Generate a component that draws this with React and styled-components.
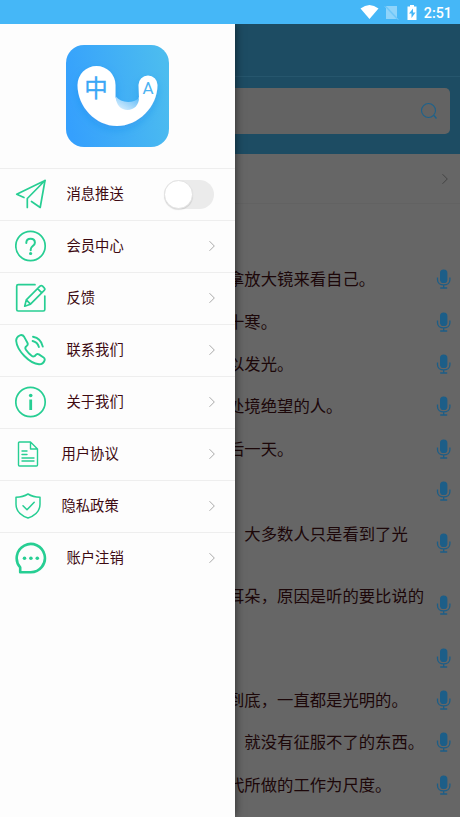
import React from 'react'
import styled, { createGlobalStyle } from 'styled-components'

const GlobalStyle = createGlobalStyle`
  * {
    box-sizing: border-box;
  }
  body {
    margin: 0;
    font-family: Roboto, "Noto Sans CJK SC", sans-serif;
    overflow: hidden;
  }
  svg {
    display: block;
    flex-shrink: 0;
  }
`;

const Screen = styled.div`
  display: flex;
  flex-direction: column;
  width: 460px;
  height: 817px;
  background: #666;
  overflow: hidden;
`;

const StatusBar = styled.header`
  display: flex;
  align-items: center;
  justify-content: flex-end;
  flex: 0 0 24px;
  height: 24px;
  padding-right: 8px;
  background: #45b7f7;
  color: #fff;
`;

const Clock = styled.span`
  margin-left: 4px;
  padding-top: 2px;
  font-size: 14.3px;
  font-weight: 500;
  line-height: 24px;
`;

const Body = styled.div`
  display: flex;
  flex: 1;
  min-height: 0;
  overflow: hidden;
`;

const Drawer = styled.aside`
  position: relative;
  z-index: 1;
  flex: 0 0 235px;
  background: #fdfdfd;
  box-shadow: 0 0 9px rgba(0, 0, 0, 0.6);
`;

const LogoBox = styled.div`
  display: flex;
  height: 144px;
  padding: 21px 0 0 66px;
`;

const MenuItem = styled.div`
  display: flex;
  align-items: center;
  height: 52px;
  padding: 0 20px 1px 15px;
  border-top: 1px solid #eee;
`;

const IconBox = styled.div`
  width: ${({ $narrow }) => ($narrow ? 46.5 : 51.5)}px;
  color: #27ce93;
`;

const Label = styled.span`
  flex: 1;
  color: #3d0a12;
  font-size: 14.3px;
  line-height: 20px;
`;

const Toggle = styled.div`
  width: 50px;
  height: 29px;
  margin-right: 1px;
  border-radius: 15px;
  background: #ebebeb;
`;

const Knob = styled.div`
  width: 29px;
  height: 29px;
  border-radius: 50%;
  background: #fff;
  border: 1px solid #e3e3e3;
  box-shadow: 0 1px 1px rgba(0, 0, 0, 0.12);
`;

const Main = styled.main`
  flex: 1;
  min-width: 0;
  overflow: hidden;
  background: #666;
`;

const TopBar = styled.div`
  height: 53px;
  background: #1d4c63;
  border-bottom: 1px solid #26566d;
`;

const SearchArea = styled.div`
  height: 77px;
  padding: 11px 10px 0 0;
  background: #1d4c63;
`;

const SearchField = styled.div`
  display: flex;
  align-items: center;
  justify-content: flex-end;
  height: 46px;
  padding-right: 12px;
  border-radius: 0 5px 5px 0;
  background: #636363;
  color: #1c628c;
`;

const LinkRow = styled.div`
  display: flex;
  align-items: center;
  justify-content: flex-end;
  height: 50px;
  padding-right: 12px;
  border-bottom: 1px solid #626262;
`;

const QuoteList = styled.div`
  padding-top: 54px;
`;

const Quote = styled.div`
  display: flex;
  align-items: center;
  justify-content: space-between;
  height: ${({ $lines }) => ($lines === 2 ? 62 : 42.4)}px;
  padding-right: 9px;
`;

/* the line starts under the drawer, which covers its first glyph */
const QuoteText = styled.p`
  height: ${({ $lines }) => ($lines === 2 ? 38 : 19)}px;
  margin: 1px 0 0 -7px;
  color: #1c0709;
  font-size: 16.35px;
  line-height: 20px;
  white-space: nowrap;
`;

const quotes = [
  { text: '拿放大镜来看自己。' },
  { text: '十寒。' },
  { text: '以发光。' },
  { text: '处境绝望的人。' },
  { text: '后一天。' },
  { text: '' },
  { text: '，大多数人只是看到了光', lines: 2 },
  { text: '耳朵，原因是听的要比说的', lines: 2 },
  { text: '' },
  { text: '到底，一直都是光明的。' },
  { text: '，就没有征服不了的东西。' },
  { text: '代所做的工作为尺度。' },
]

const stroke = {
  fill: 'none',
  stroke: 'currentColor',
  strokeWidth: 1.7,
  strokeLinecap: 'round',
  strokeLinejoin: 'round',
}

const PlaneIcon = () => (
  <svg width="32" height="32" viewBox="0 0 32 32" {...stroke}>
    <path d="M9 19.500 1.700 16.200 30 2.500 12.300 20.500V29.500" />
    <path d="M30 2.500 25.200 29.500 16.500 23.500" />
  </svg>
)

const QuestionIcon = () => (
  <svg width="32" height="32" viewBox="0 0 32 32" {...stroke}>
    <circle cx="15.500" cy="16" r="14.700" />
    <path d="M11.300 13c0-2.700 1.800-4.300 4.300-4.300s4.300 1.600 4.300 4c0 3.200-4.200 3.600-4.200 6.700v.8" strokeWidth="2" />
    <circle cx="15.600" cy="23.500" r="1.600" fill="currentColor" stroke="none" />
  </svg>
)

const EditIcon = () => (
  <svg width="32" height="32" viewBox="0 0 32 32" {...stroke}>
    <path d="M20 2.700H3.200Q1.700 2.700 1.700 4.200v23.300Q1.700 29 3.200 29h25.100q1.500 0 1.500-1.500V14" />
    <path d="M9.700 24.200l1.600-6.300L25 4.200q1.300-1.200 2.600 0l1.600 1.600q1.300 1.300 0 2.600L15.500 22.200zM11.300 17.900l4.200 4.300M22.600 6.600l4.200 4.200" />
  </svg>
)

const PhoneIcon = () => (
  <svg width="32" height="32" viewBox="0 0 32 32" {...stroke} strokeWidth="1.900">
    <path d="M4.600 1.500C2.500 2.500 1 4.600 1.200 7c.8 9.600 13.500 22.600 22.800 23.300 2.300.1 4.700-1.700 5.500-3.700.5-1.300.1-2.400-.9-3.100l-4.700-3.100c-1.200-.7-2.500-.4-3.300.7-1.100 1.500-2.400 1.800-4 .6-2-1.500-4.100-3.700-5.700-6-1-1.500-.7-2.700.7-3.700 1.200-.9 1.500-2 .8-3.300L9.300 3.100C8.200 1.300 6.600.6 4.600 1.500z" />
    <path d="M18 2.700q8 1.500 9.800 9.900M17.600 7q5 1.200 6.300 6" strokeWidth="1.900" />
  </svg>
)

const InfoIcon = () => (
  <svg width="32" height="32" viewBox="0 0 32 32" {...stroke}>
    <circle cx="15.500" cy="16" r="14.700" />
    <path d="M15.700 13.500v10.500" strokeWidth="2.800" strokeLinecap="butt" />
    <circle cx="15.700" cy="9.500" r="1.800" fill="currentColor" stroke="none" />
  </svg>
)

const DocIcon = () => (
  <svg width="26" height="26" viewBox="0 0 26 26" {...stroke} strokeWidth="1.400">
    <path d="M15.500 1H4.500Q3.500 1 3.500 2v22q0 1 1 1h17q1 0 1-1V8zM15.500 1v7h7M7 10h5M7 13.500h5M7 17h12M7 20h12" />
  </svg>
)

const ShieldIcon = () => (
  <svg width="26" height="26" viewBox="0 0 26 26" {...stroke} strokeWidth="1.500">
    <path d="M13 1q5 3.200 12 3.200v7C25 18 20.500 22.500 13 25 5.500 22.500 1 18 1 11.200v-7Q8 4.200 13 1z" />
    <path d="M8 12.800l4 4 7.200-7.600" />
  </svg>
)

const ChatIcon = () => (
  <svg width="32" height="32" viewBox="0 0 32 32" {...stroke} strokeWidth="2.600">
    <path d="M5.200 30.200V25.400A14.100 14.100 0 1 1 15.700 30.200z" />
    <g fill="currentColor" stroke="none">
      <circle cx="9.500" cy="16.200" r="1.800" />
      <circle cx="15.900" cy="16.200" r="1.800" />
      <circle cx="22.300" cy="16.200" r="1.800" />
    </g>
  </svg>
)

const Chevron = ({ color }) => (
  <svg width="6" height="10" viewBox="0 0 6 10" fill="none" stroke={color}>
    <path d="M.5.2 5.300 5 .5 9.800" />
  </svg>
)

const SearchIcon = () => (
  <svg width="18" height="18" viewBox="0 0 18 18" fill="none" stroke="currentColor" strokeWidth="1.100">
    <circle cx="8.500" cy="8.500" r="7" />
    <path d="M14 13.500l2.500 3" strokeWidth="1.400" />
  </svg>
)

const MicIcon = () => (
  <svg width="15" height="20" viewBox="0 0 15 20" fill="none" stroke="#1c5e88" strokeWidth="1.300">
    <rect x="4" y=".5" width="7.400" height="13.500" rx="3.600" fill="#1c5e88" stroke="none" />
    <path d="M1.500 8.500v2.200c0 3 2.600 5.200 6.200 5.200s6.200-2.200 6.200-5.200V8.500M7.700 16v3M4.200 19h7" />
  </svg>
)

const StatusIcons = () => (
  <svg width="60" height="24" viewBox="0 0 60 24" fill="#fff">
    <path d="M.5 8.500Q9.500 1.500 18.500 8.500L9.500 19z" />
    <path d="M37 6v11.500L25.800 6zM26 8v11h10.500z" opacity=".4" />
    <path d="M25 6.500l13 13" stroke="#fff" strokeWidth="1" opacity=".4" />
    <path d="M50 5h4v1.500h2.500V20h-9V6.500H50z" />
    <path d="M53 8.500l-4 5h2.500V18l4-5.500H53z" fill="#45b7f7" />
  </svg>
)

const AppLogo = () => (
  <svg width="103" height="102" viewBox="0 0 103 102">
    <defs>
      <linearGradient id="tile" x1="0" y1=".6" x2="1" y2=".4">
        <stop offset="0" stopColor="#35a0fd" />
        <stop offset="1" stopColor="#4cbcef" />
      </linearGradient>
      <linearGradient id="fold" x1="0" y1="1" x2="1" y2="0">
        <stop offset="0" stopColor="#e6f5ff" />
        <stop offset="1" stopColor="#57b6f6" />
      </linearGradient>
      <filter id="soft" x="-20%" y="-20%" width="140%" height="150%">
        <feDropShadow dx="0" dy="4" stdDeviation="4" floodColor="#1683e6" floodOpacity=".35" />
      </filter>
    </defs>
    <rect width="103" height="102" rx="18" fill="url(#tile)" />
    <path d="M11.500 40A19 19 0 0 1 49.500 40V52A12 13 0 0 0 73 52L72.500 40A9.500 9.500 0 0 1 91.500 40C91.500 62 72 81 51 81S11.500 62 11.500 40z" fill="#fff" filter="url(#soft)" />
    <path d="M49.500 51c5 7 17 8 23.500 2 0 7-5 12-11.500 12s-11.500-5-12-14z" fill="url(#fold)" />
    <text x="30" y="51.500" textAnchor="middle" fontFamily="Noto Sans CJK SC, sans-serif" fontSize="23.500" fill="#3ba7f6" stroke="#3ba7f6" strokeWidth=".3">中</text>
    <text x="82" y="49" textAnchor="middle" fontFamily="Roboto, sans-serif" fontSize="17" fill="#4cb3f2">A</text>
  </svg>
)

const menu = [
  { label: '消息推送', Icon: PlaneIcon, toggle: true },
  { label: '会员中心', Icon: QuestionIcon },
  { label: '反馈', Icon: EditIcon },
  { label: '联系我们', Icon: PhoneIcon },
  { label: '关于我们', Icon: InfoIcon },
  { label: '用户协议', Icon: DocIcon, narrow: true },
  { label: '隐私政策', Icon: ShieldIcon, narrow: true },
  { label: '账户注销', Icon: ChatIcon },
]

function App() {

  return (
    <Screen>
      <GlobalStyle/>
      <StatusBar>
        <StatusIcons/>
        <Clock>2:51</Clock>
      </StatusBar>
      <Body>
        <Drawer>
          <LogoBox>
            <AppLogo/>
          </LogoBox>
          {menu.map(({ label, Icon, narrow, toggle }) => (
            <MenuItem key={label}>
              <IconBox $narrow={narrow}><Icon/></IconBox>
              <Label>{label}</Label>
              {toggle ? <Toggle><Knob/></Toggle> : <Chevron color="#a9a9a9"/>}
            </MenuItem>
          ))}
        </Drawer>
        <Main>
          <TopBar/>
          <SearchArea>
            <SearchField><SearchIcon/></SearchField>
          </SearchArea>
          <LinkRow><Chevron color="#444"/></LinkRow>
          <QuoteList>
            {quotes.map(({ text, lines }, i) => (
              <Quote key={i} $lines={lines}>
                <QuoteText $lines={lines}>{text}</QuoteText>
                <MicIcon/>
              </Quote>
            ))}
          </QuoteList>
        </Main>
      </Body>
    </Screen>
  )
}

export default App
